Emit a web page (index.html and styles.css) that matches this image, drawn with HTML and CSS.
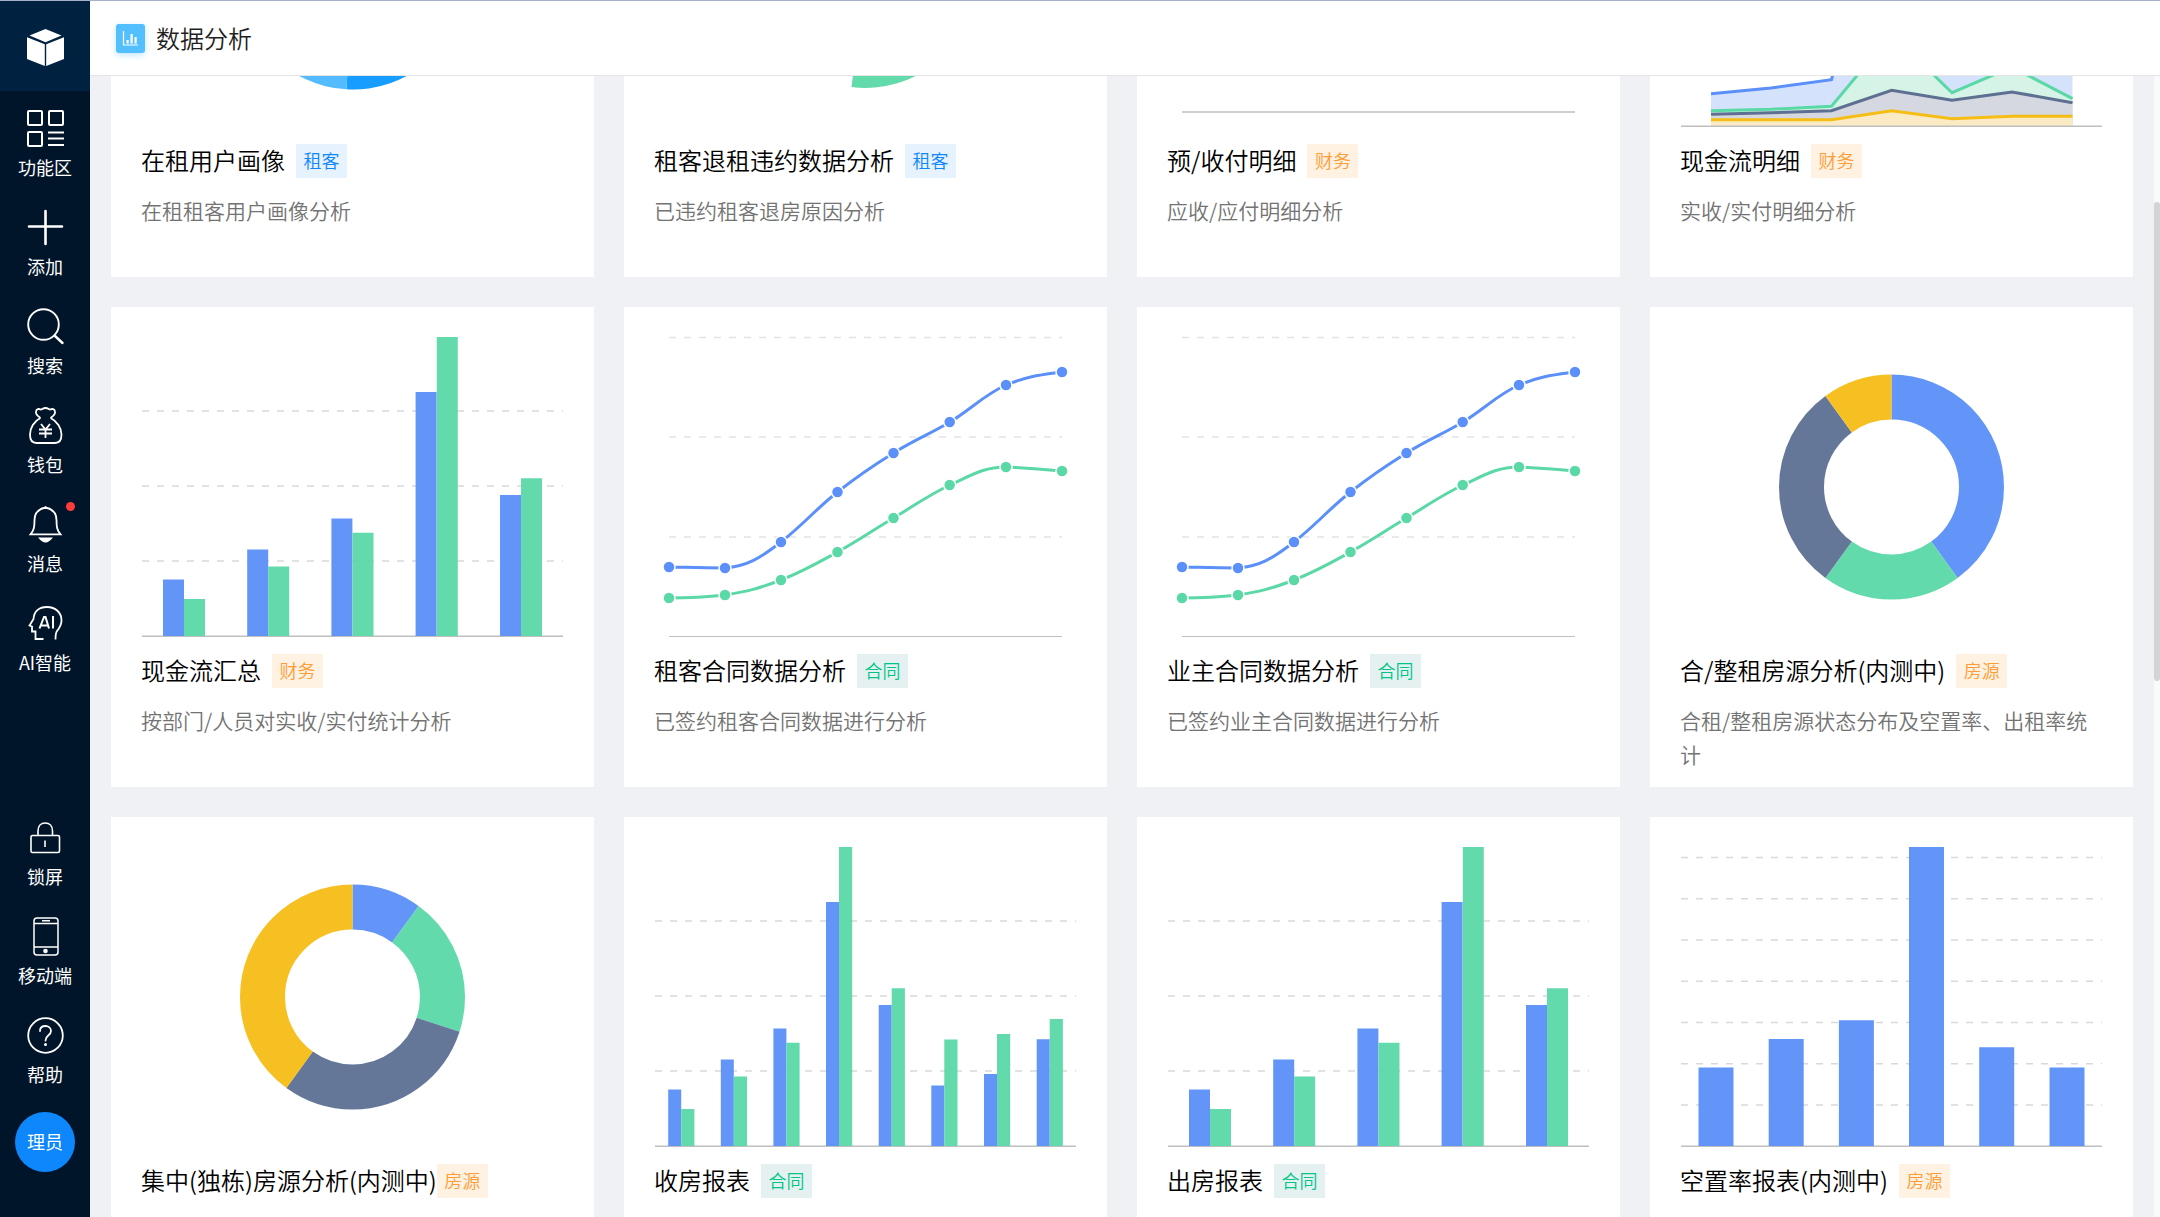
FILE: index.html
```html
<!DOCTYPE html>
<html lang="zh-CN">
<head>
<meta charset="utf-8">
<title>数据分析</title>
<link rel="stylesheet" href="styles.css">
</head>
<body>
<div class="app">
  <nav class="sidebar">
    <a class="logo" href="#" aria-label="首页">
      <svg class="icon" viewBox="0 0 37 37" fill="#fff"><path d="M18.500 0 34.500 6.500 18.500 13.200 2.500 6.500z"/><path d="M0 8.200 17.800 15.200V37L0 30z"/><path d="M37 8.200 19.200 15.200V37L37 30z"/></svg>
    </a>
    <button class="item" type="button">
      <svg class="icon" viewBox="0 0 37 37"><g stroke-width="2"><rect x="1" y="1" width="14" height="14" rx="1"/><rect x="22" y="1" width="14" height="14" rx="1"/><rect x="1" y="22" width="14" height="14" rx="1"/><path d="M21 22.500h16M21 28.500h16M21 35h16"/></g></svg>
      <span>功能区</span>
    </button>
    <button class="item" type="button">
      <svg class="icon" viewBox="0 0 37 37"><path stroke-width="2.600" stroke-linecap="round" d="M18.500 2v33M2 17.500h33"/></svg>
      <span>添加</span>
    </button>
    <button class="item" type="button">
      <svg class="icon" viewBox="0 0 37 37"><circle cx="16.500" cy="16.500" r="15.300" stroke-width="1.900"/><path stroke-width="2.400" stroke-linecap="round" d="M27.500 27.500 35.500 35"/></svg>
      <span>搜索</span>
    </button>
    <button class="item" type="button">
      <svg class="icon" viewBox="0 0 37 37"><path d="M13.500 11C10.500 9 8.500 6.500 9 4.500 9.500 2 12 1.500 13.500 2.500 15 3 15.500 1 18.500 1S22 3 23.500 2.500C25 1.500 27.500 2 28 4.500 28.500 6.500 26.500 9 23.500 11M13.500 11C7 14 3 21 3 27.500 3 33.500 5 36 9.500 36H28C32.500 36 34.500 33.500 34.500 27.500 34.500 21 30 14 23.500 11"/><path d="M14 17 18.500 22.500 23 17M18.500 22.500V31M12 22.500H25M12 26.500H25"/></svg>
      <span>钱包</span>
    </button>
    <button class="item" type="button">
      <svg class="icon" viewBox="0 0 37 37"><path d="M18.500 1.500C11.500 3 7.500 7 7.500 14 7.500 21 7 24 3.500 28.300H33.500C30 24 29.500 21 29.500 14 29.500 7 25.500 3 18.500 1.500z"/><path fill="#fff" stroke="none" d="M17 1.500 18.500 0 20 1.500 20 3H17zM11 31.500H26C23 35 21 36.500 18.500 36.500S14 35 11 31.500z"/></svg>
      <span>消息</span>
      <i class="dot"></i>
    </button>
    <button class="item" type="button">
      <svg class="icon" viewBox="0 0 37 37"><path d="M16.500 34H8.500V26.500H5V21.500L2.500 20.500 6.500 14C7 6.500 12 2 20 2 28.500 2 34.500 7.500 34.500 15.500 34.500 20.500 32 23.500 30 26 28.500 28 28.500 30 28.500 34.500"/><path stroke-width="2" d="M12.500 23.500 17 12H18.500L22 23.500M14 20.500H21M26 11V23.500"/></svg>
      <span>AI智能</span>
    </button>
    <div class="spacer"></div>
    <button class="item" type="button">
      <svg class="icon" viewBox="0 0 37 37"><rect x="4" y="16.500" width="28.500" height="17" rx="1.500" stroke-width="1.600"/><path d="M11 16V12C11 7 14 4 18.200 4S25.500 7 25.500 12V16M18 21.500V28" stroke-width="1.600"/></svg>
      <span>锁屏</span>
    </button>
    <button class="item" type="button">
      <svg class="icon" viewBox="0 0 37 37"><g stroke-width="1.500"><rect x="7" y="0" width="24" height="37" rx="3"/><path d="M7 5.500h24M7 29h24M15 2.800h8"/></g><circle cx="18.500" cy="33" r="2.300" fill="#fff" stroke="none"/></svg>
      <span>移动端</span>
    </button>
    <button class="item" type="button">
      <svg class="icon" viewBox="0 0 37 37"><circle cx="18.500" cy="18.500" r="17.300"/><path stroke-linecap="round" d="M13 14C13 10.500 15.500 9 18.500 9S24 11 24 14C24 18.500 18.500 18 18.500 23.500"/><circle cx="18.500" cy="27.500" r="1.500" fill="#fff" stroke="none"/></svg>
      <span>帮助</span>
    </button>
    <button class="avatar" type="button">理员</button>
  </nav>

  <div class="page">
    <header class="topbar">
      <svg class="badge" viewBox="0 0 29 29"><rect width="29" height="29" rx="2" fill="#54bfff"/><path d="M7.500 7v14h14.500" fill="none" stroke="#fff" stroke-width="1.200"/><path d="M10.500 16h2.200v3.500h-2.200zM14.500 10h2.200v9.500h-2.200zM18.500 13h2.200v6.500h-2.200z" fill="#fff"/></svg>
      <h1>数据分析</h1>
    </header>
    <div class="body">
      <main class="scroller" id="scroller">
        <div class="cards">

          <article class="card">
            <svg class="chart" viewBox="0 0 483 347">
              <path fill="#179dff" d="M241.500 180V67.500A112.500 112.500 0 1 1 235.500 292.300z"/>
              <path fill="#55bbff" d="M241.500 180 235.500 292.300A112.500 112.500 0 0 1 129 180z"/>
              <path fill="#a8dcff" d="M241.500 180H129A112.500 112.500 0 0 1 241.500 67.500z"/>
            </svg>
            <div class="head"><h2>在租用户画像</h2><span class="tag blue">租客</span></div>
            <p>在租租客用户画像分析</p>
          </article>

          <article class="card">
            <svg class="chart" viewBox="0 0 483 347">
              <path fill="#62daaa" d="M241.500 180H352.500A111 111 0 0 1 227.500 290.100z"/>
              <path fill="#6395f9" d="M241.500 180V100A80 80 0 0 1 321.500 180z"/>
              <path fill="#f6c022" d="M241.500 180H181.500A60 60 0 0 1 241.500 120z"/>
            </svg>
            <div class="head"><h2>租客退租违约数据分析</h2><span class="tag blue">租客</span></div>
            <p>已违约租客退房原因分析</p>
          </article>

          <article class="card">
            <svg class="chart" viewBox="0 0 483 347">
              <path class="axis" d="M45 315H438"/>
            </svg>
            <div class="head"><h2>预/收付明细</h2><span class="tag orange">财务</span></div>
            <p>应收/应付明细分析</p>
          </article>

          <article class="card">
            <svg class="chart" viewBox="0 0 483 347">
              <path fill="#d5e2fc" d="M61 329V296.700L121 291 181.500 282.700 241.700 30 422.500 200V329z"/>
              <path fill="#d5f3e7" d="M61 329V313.700L121 312.300 181.500 309.300 241.700 237 302 295.700 362 270 422.500 301.700V329z"/>
              <path fill="#d5d8e1" d="M61 329V317.300L121 315.700 181.500 313.700 241.700 293.300 302 303.300 362 295 422.500 305.700V329z"/>
              <path fill="#faebc5" d="M61 329V322.700H181.500L241.700 313.700 302 321.700 362 319.300H422.500V329z"/>
              <path class="line b" d="M61 296.700 121 291 181.500 282.700 241.700 30 422.500 200"/>
              <path class="line g" d="M61 313.700 121 312.300 181.500 309.300 241.700 237 302 295.700 362 270 422.500 301.700"/>
              <path class="line s" d="M61 317.300 121 315.700 181.500 313.700 241.700 293.300 302 303.300 362 295 422.500 305.700"/>
              <path class="line y" d="M61 322.700H181.500L241.700 313.700 302 321.700 362 319.300H422.500"/>
              <path class="axis" d="M31 329.200H452"/>
            </svg>
            <div class="head"><h2>现金流明细</h2><span class="tag orange">财务</span></div>
            <p>实收/实付明细分析</p>
          </article>

          <article class="card">
            <svg class="chart" viewBox="0 0 483 347">
              <path class="grid" d="M31 104H452M31 179H452M31 254H452"/>
              <path class="axis" d="M31 329.200H452"/>
              <path class="bar b" d="M52 272.500h21V329h-21zM136.200 242.500h21V329h-21zM220.400 211.500h21V329h-21zM304.600 85h21V329h-21zM389 188h21V329h-21z"/>
              <path class="bar g" d="M73 292h21V329h-21zM157.200 259.500h21V329h-21zM241.500 225.700h21V329h-21zM325.800 30h21V329h-21zM410 171.200h21V329h-21z"/>
            </svg>
            <div class="head"><h2>现金流汇总</h2><span class="tag orange">财务</span></div>
            <p>按部门/人员对实收/实付统计分析</p>
          </article>

          <article class="card">
            <svg class="chart" viewBox="0 0 483 347">
              <defs>
                <g id="trend">
                  <path class="grid pale" d="M45 30.500H438M45 130H438M45 230H438"/>
                  <path class="axis thin" d="M45 329.500H438"/>
                  <path class="line b" d="M45 260C67 260.500 79 261 101 261 123 259 135 252 157 235 179 218 191 202.800 213.500 185 236 167.200 247 160 269.500 146 292 132 303 128.600 326 115 348 101.400 360 88 382 78 404 69 416 68 438 65"/>
                  <path class="line g" d="M45 291C67 291 79 290.500 101 288 123 284.400 135 281.600 157 273 179 264.400 191 257.400 213.500 245 236 232.600 247 224.400 269.500 211 292 197.600 303 189 326 178 348 167.800 360 160 382 160 404 161 416 162 438 164"/>
                  <g class="dots b"><circle cx="45" cy="260" r="6"/><circle cx="101" cy="261" r="6"/><circle cx="157" cy="235" r="6"/><circle cx="213.500" cy="185" r="6"/><circle cx="269.500" cy="146" r="6"/><circle cx="325.700" cy="115" r="6"/><circle cx="382" cy="78" r="6"/><circle cx="438" cy="65" r="6"/></g>
                  <g class="dots g"><circle cx="45" cy="291" r="6"/><circle cx="101" cy="288" r="6"/><circle cx="157" cy="273" r="6"/><circle cx="213.500" cy="245" r="6"/><circle cx="269.500" cy="211" r="6"/><circle cx="325.700" cy="178" r="6"/><circle cx="382" cy="160" r="6"/><circle cx="438" cy="164" r="6"/></g>
                </g>
              </defs>
              <use href="#trend"/>
            </svg>
            <div class="head"><h2>租客合同数据分析</h2><span class="tag green">合同</span></div>
            <p>已签约租客合同数据进行分析</p>
          </article>

          <article class="card">
            <svg class="chart" viewBox="0 0 483 347"><use href="#trend"/></svg>
            <div class="head"><h2>业主合同数据分析</h2><span class="tag green">合同</span></div>
            <p>已签约业主合同数据进行分析</p>
          </article>

          <article class="card">
            <svg class="chart" viewBox="0 0 483 347">
              <g class="donut" transform="rotate(-90 241.500 180)">
                <circle class="b" cx="241.500" cy="180" r="90" pathLength="100" stroke-dasharray="40 60"/>
                <circle class="g" cx="241.500" cy="180" r="90" pathLength="100" stroke-dasharray="20 80" stroke-dashoffset="-40"/>
                <circle class="s" cx="241.500" cy="180" r="90" pathLength="100" stroke-dasharray="30 70" stroke-dashoffset="-60"/>
                <circle class="y" cx="241.500" cy="180" r="90" pathLength="100" stroke-dasharray="10 90" stroke-dashoffset="-90"/>
              </g>
            </svg>
            <div class="head"><h2>合/整租房源分析(内测中)</h2><span class="tag orange">房源</span></div>
            <p>合租/整租房源状态分布及空置率、出租率统计</p>
          </article>

          <article class="card">
            <svg class="chart" viewBox="0 0 483 347">
              <g class="donut" transform="rotate(-90 241.500 180)">
                <circle class="b" cx="241.500" cy="180" r="90" pathLength="100" stroke-dasharray="10 90"/>
                <circle class="g" cx="241.500" cy="180" r="90" pathLength="100" stroke-dasharray="20 80" stroke-dashoffset="-10"/>
                <circle class="s" cx="241.500" cy="180" r="90" pathLength="100" stroke-dasharray="30 70" stroke-dashoffset="-30"/>
                <circle class="y" cx="241.500" cy="180" r="90" pathLength="100" stroke-dasharray="40 60" stroke-dashoffset="-60"/>
              </g>
            </svg>
            <div class="head tight"><h2>集中(独栋)房源分析(内测中)</h2><span class="tag orange">房源</span></div>
          </article>

          <article class="card">
            <svg class="chart" viewBox="0 0 483 347">
              <path class="grid" d="M31 104H452M31 179H452M31 254H452"/>
              <path class="axis" d="M31 329.200H452"/>
              <path class="bar b" d="M44.200 272.500h13V329h-13zM96.800 242.500h13V329h-13zM149.400 211.500h13V329h-13zM202 85h13V329h-13zM254.700 188h13V329h-13zM307.300 268.500h13V329h-13zM360 257h13V329h-13zM412.700 222.300h13V329h-13z"/>
              <path class="bar g" d="M57.200 292h13.200V329h-13.200zM109.800 259.500h13.200V329h-13.200zM162.400 225.700h13.200V329h-13.200zM215 30h13.200V329h-13.200zM267.700 171.200h13.200V329h-13.200zM320.300 222.500h13.200V329h-13.200zM373 217h13.200V329h-13.200zM425.700 202h13.200V329h-13.200z"/>
            </svg>
            <div class="head"><h2>收房报表</h2><span class="tag green">合同</span></div>
          </article>

          <article class="card">
            <svg class="chart" viewBox="0 0 483 347">
              <path class="grid" d="M31 104H452M31 179H452M31 254H452"/>
              <path class="axis" d="M31 329.200H452"/>
              <path class="bar b" d="M52 272.500h21V329h-21zM136.200 242.500h21V329h-21zM220.400 211.500h21V329h-21zM304.600 85h21V329h-21zM389 188h21V329h-21z"/>
              <path class="bar g" d="M73 292h21V329h-21zM157.200 259.500h21V329h-21zM241.500 225.700h21V329h-21zM325.800 30h21V329h-21zM410 171.200h21V329h-21z"/>
            </svg>
            <div class="head"><h2>出房报表</h2><span class="tag green">合同</span></div>
          </article>

          <article class="card">
            <svg class="chart" viewBox="0 0 483 347">
              <path class="grid" d="M31 40.500H452M31 81.700H452M31 123H452M31 164.200H452M31 205.500H452M31 246.700H452M31 288H452"/>
              <path class="axis" d="M31 329.200H452"/>
              <path class="bar b" d="M48.500 250.500h35V329h-35zM118.700 222h35V329h-35zM188.900 203.200h35V329h-35zM259 30h35V329h-35zM329.200 230.200h35V329h-35zM399.500 250.500h35V329h-35z"/>
            </svg>
            <div class="head"><h2>空置率报表(内测中)</h2><span class="tag orange">房源</span></div>
          </article>

        </div>
      </main>
      <div class="track"><div class="thumb"></div></div>
    </div>
  </div>
</div>
<script src="main.js"></script>
</body>
</html>
```
FILE: styles.css
```css
* {
  box-sizing: border-box;
}

body {
  margin: 0;
  font-family: "Noto Sans CJK SC", "Noto Sans", sans-serif;
  color: #000;
  background: #f0f1f5;
}

h1, h2, p {
  margin: 0;
  font-weight: 350;
}

.app {
  display: flex;
  height: 100vh;
  border-top: 1px solid #a5b1cb;
}

/* Sidebar */
.sidebar {
  display: flex;
  flex-direction: column;
  flex: none;
  width: 90px;
  padding-bottom: 45px;
  background: #001529;
}

.logo {
  display: flex;
  align-items: center;
  justify-content: center;
  height: 90px;
  padding-top: 2px;
  background: #002140;
}

.icon {
  display: block;
  width: 37px;
  height: 37px;
  overflow: visible;
}

.item {
  position: relative;
  display: flex;
  flex-direction: column;
  align-items: center;
  justify-content: flex-start;
  gap: 6px;
  height: 99px;
  padding: 19px 0 9px;
  border: 0;
  background: none;
  color: #fff;
  font: 400 18px/28px "Noto Sans CJK SC", "Noto Sans", sans-serif;
}

.item .icon {
  fill: none;
  stroke: #fff;
  stroke-width: 1.8;
}

.dot {
  position: absolute;
  top: 15px;
  right: 15px;
  width: 9px;
  height: 9px;
  border-radius: 50%;
  background: #ff3b3b;
}

.spacer {
  flex: 1;
}

.avatar {
  width: 60px;
  height: 60px;
  margin: 15px auto 0;
  padding: 0 0 2px;
  border: 0;
  border-radius: 50%;
  background: #0d87fb;
  color: #fff;
  font: 400 18px/28px "Noto Sans CJK SC", "Noto Sans", sans-serif;
}

/* Page */
.page {
  display: flex;
  flex-direction: column;
  flex: 1;
  min-width: 0;
}

.topbar {
  display: flex;
  align-items: center;
  gap: 11px;
  flex: none;
  height: 75px;
  padding: 0 26px;
  border-bottom: 1px solid #e6e6e6;
  background: #fff;
}

.badge {
  width: 29px;
  height: 29px;
  border-radius: 2px;
  box-shadow: 0 2px 6px #bfe6ff;
}

.topbar h1 {
  font-size: 24px;
  line-height: 36px;
  color: #1f1f1f;
}

.body {
  display: flex;
  flex: 1;
  min-height: 0;
}

.scroller {
  flex: 1;
  overflow: hidden;
}

.cards {
  display: grid;
  grid-template-columns: repeat(4, 1fr);
  grid-auto-rows: minmax(480px, auto);
  gap: 30px;
  padding: 21px;
}

.card {
  background: #fff;
}

.chart {
  display: block;
  width: 100%;
  overflow: visible;
}

.head {
  display: flex;
  align-items: center;
  gap: 11px;
  height: 34px;
  padding: 0 30px;
}

.head.tight {
  gap: 0;
}

.head h2 {
  padding-bottom: 2px;
  font-size: 24px;
  line-height: 32px;
}

.tag {
  min-width: 51px;
  padding: 0 7px 2px;
  font-size: 18px;
  font-weight: 350;
  line-height: 32px;
  text-align: center;
}

.tag.blue {
  background: #e6f2fe;
  color: #0d87fb;
}

.tag.orange {
  background: #fff2e3;
  color: #ff9c35;
}

.tag.green {
  background: #e5f1f1;
  color: #00c586;
}

.card p {
  padding: 15px 30px 0;
  font-size: 21px;
  line-height: 34px;
  color: #737373;
}

/* Scroll indicator */
.track {
  display: grid;
  grid-template-rows: 11% 42%;
  flex: none;
  width: 6px;
  border-radius: 3px;
  background: #fafafa;
}

.thumb {
  grid-row: 2;
  border-radius: 3px;
  background: #d4d4d6;
}

/* Charts */
.b { --series: #5b8ff9; }
.g { --series: #5ad8a6; }
.s { --series: #5d7092; }
.y { --series: #f6bd16; }

.bar {
  fill: var(--series);
  fill-opacity: 0.95;
}

.line {
  fill: none;
  stroke: var(--series);
  stroke-width: 3;
}

.dots {
  fill: var(--series);
  stroke: #fff;
  stroke-width: 1.5;
}

.donut circle {
  fill: none;
  stroke: var(--series);
  stroke-width: 45;
  stroke-opacity: 0.95;
}

.grid {
  stroke: #d9d9d9;
  stroke-width: 1.5;
  stroke-dasharray: 7 8;
}

.grid.pale {
  stroke: #e3e3e3;
}

.axis {
  stroke: #bfbfbf;
  stroke-width: 1.5;
}

.axis.thin {
  stroke-width: 1;
}
```
FILE: main.js
```js
document.getElementById('scroller').scrollTop = 300;
```
